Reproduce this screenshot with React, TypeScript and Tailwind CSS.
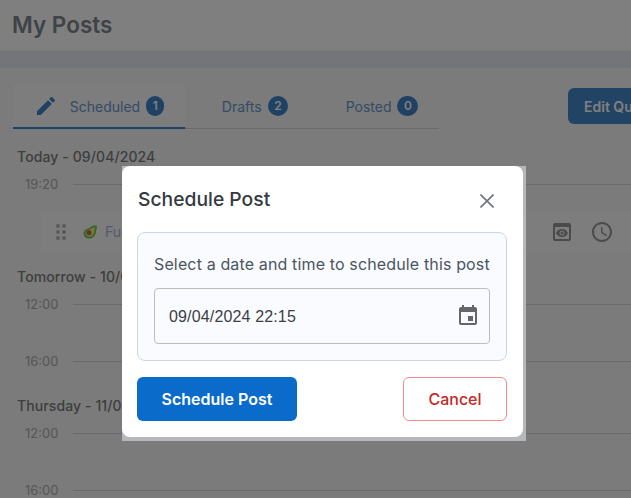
import React from 'react';

const EditIcon = () => (
  <svg viewBox="0 0 24 24" className="h-6 w-6 fill-[#3f83c8]" aria-hidden="true">
    <path d="M3 17.25V21h3.75L17.81 9.94l-3.75-3.75L3 17.25zM20.71 7.04a.996.996 0 0 0 0-1.41l-2.34-2.34a.996.996 0 0 0-1.41 0l-1.83 1.83 3.75 3.75 1.83-1.83z" />
  </svg>
);

const CalendarIcon = () => (
  <svg viewBox="0 0 24 24" className="h-6 w-6 fill-[#646669]" aria-hidden="true">
    <path d="M17 12h-5v5h5v-5zM16 1v2H8V1H6v2H5c-1.11 0-1.99.9-1.99 2L3 19c0 1.1.89 2 2 2h14c1.1 0 2-.9 2-2V5c0-1.1-.9-2-2-2h-1V1h-2zm3 18H5V8h14v11z" />
  </svg>
);

const PreviewIcon = () => (
  <svg viewBox="0 0 24 24" className="h-6 w-6 fill-[#969696]" aria-hidden="true">
    <path d="M19 3H5c-1.11 0-2 .9-2 2v14c0 1.1.89 2 2 2h14c1.1 0 2-.9 2-2V5c0-1.1-.89-2-2-2zm0 16H5V7h14v12zm-5.5-6c0 .83-.67 1.5-1.5 1.5s-1.5-.67-1.5-1.5.67-1.5 1.5-1.5 1.5.67 1.5 1.5zM12 9c-2.73 0-5.06 1.66-6 4 .94 2.34 3.27 4 6 4s5.06-1.66 6-4c-.94-2.34-3.27-4-6-4zm0 6.5c-1.38 0-2.5-1.12-2.5-2.5s1.12-2.5 2.5-2.5 2.5 1.12 2.5 2.5-1.12 2.5-2.5 2.5z" />
  </svg>
);

const ClockIcon = () => (
  <svg viewBox="0 0 24 24" className="h-6 w-6 fill-[#969696]" aria-hidden="true">
    <path d="M11.99 2C6.47 2 2 6.48 2 12s4.47 10 9.99 10C17.52 22 22 17.52 22 12S17.52 2 11.99 2zM12 20c-4.42 0-8-3.58-8-8s3.58-8 8-8 8 3.58 8 8-3.58 8-8 8zm.5-13H11v6l5.25 3.15.75-1.23-4.5-2.67z" />
  </svg>
);

const Avocado = () => (
  <svg viewBox="0 0 14 14" className="h-[14px] w-[14px] shrink-0" aria-hidden="true">
    <path d="M13.600.6c.6 1.700.2 3.800-.7 5.400.2 1.200-.2 3.400-1.700 5.200C9.700 13 7.500 13.800 5.300 13.500 2.500 13.100.4 10.800.5 8.200.6 5.900 2.300 4.300 4.500 3.700c1.200-.3 2.100-.7 2.900-1.500C8.700.9 11 .2 13.600.6z" fill="#7cc84a" />
    <path d="M11.800 2.200c.3 1.200 0 2.600-.6 3.800.1 1-.2 2.500-1.300 3.800-1.100 1.400-2.700 2-4.300 1.800-1.900-.3-3.200-1.800-3.100-3.500.1-1.500 1.200-2.500 2.700-2.900 1.300-.4 2.600-.9 3.500-1.800.8-.8 1.900-1.200 3.100-1.200z" fill="#f0f078" />
    <circle cx="6" cy="7.800" r="2.500" fill="#b06a5a" />
  </svg>
);

const tabs = [
  { name: 'Scheduled', count: 1, className: 'w-[172px] -mb-px border-b-2 border-[#3f83c8] bg-[#fafafa]' },
  { name: 'Drafts', count: 2, className: 'w-[140px]' },
  { name: 'Posted', count: 0, className: 'w-[114px]' },
];

// gruppi del calendario dietro al dialog
const days = [
  { title: 'Today - 09/04/2024', slots: ['19:20'], titleClass: 'mt-[18px]', hasPost: true },
  { title: 'Tomorrow - 10/04/2024', slots: ['12:00', '16:00'], titleClass: 'mt-[15px]', hasPost: false },
  { title: 'Thursday - 11/04/2024', slots: ['12:00', '16:00'], titleClass: 'mt-[28px]', hasPost: false },
];

const PostRow = () => (
  <div className="mt-[21px] ml-[41px] flex h-[40px] items-center rounded bg-[#fafafa] pr-[17px]">
    <div className="ml-[15px] grid grid-cols-2 gap-[2px]">
      {[0, 1, 2, 3, 4, 5].map((i) => (
        <span key={i} className="h-1 w-1 rounded-full bg-[#b4b4b4]" />
      ))}
    </div>
    <div className="ml-[17px] flex items-center gap-2">
      <Avocado />
      <span className="text-sm text-[#a4b6dc]">Fuel your day</span>
    </div>
    <div className="ml-auto flex items-center gap-4">
      <PreviewIcon />
      <ClockIcon />
    </div>
  </div>
);

export default function App() {
  return (
    <div className="relative h-[498px] w-[631px] overflow-hidden bg-white font-['Inter',sans-serif]">
      <header className="flex h-[52px] items-center border-b border-[#e6e6e6] px-3 pb-[2px]">
        <h1 className="text-[22.500px] font-semibold text-[#7f8790]">My Posts</h1>
      </header>
      <div className="h-4 bg-[#e8ebf0]" />

      <main className="h-[430px] bg-[#f5f6f5]">
        <div className="flex items-start pt-4">
          <div className="ml-[13px] flex h-[45px] w-[426px] items-stretch border-b border-[#d4d4d4]">
            {tabs.map((t, i) => (
              <div key={t.name} className={`flex items-center justify-center gap-[6px] ${t.className}`}>
                {i === 0 && (
                  <span className="mr-[6px]">
                    <EditIcon />
                  </span>
                )}
                <span className="pt-[2px] text-sm text-[#6a96cc]">{t.name}</span>
                <span className="flex h-5 items-center justify-center rounded-full bg-[#3f83c8] px-[6.500px] text-xs font-semibold text-white">
                  {t.count}
                </span>
              </div>
            ))}
          </div>
          <button className="mt-1 ml-auto flex h-[36px] w-[63px] items-center overflow-hidden rounded-l-md bg-[#4488c8] pt-[2px] pl-4 text-sm font-semibold whitespace-nowrap text-white">
            Edit Queue
          </button>
        </div>

        {days.map((day) => (
          <section key={day.title} className={day.titleClass}>
            <h2 className="ml-[17px] text-sm leading-5 font-medium tracking-[0.1px] text-[#7c7c7c]">{day.title}</h2>
            {day.slots.map((slot, i) => (
              <div key={slot} className={`flex items-center ${i === 0 ? 'mt-[10px]' : 'mt-[43px]'}`}>
                <span className="ml-[25px] w-[48px] text-[13px] leading-[14px] text-[#acacac]">{slot}</span>
                <div className="h-px flex-1 bg-[#d4d4d4]" />
              </div>
            ))}
            {day.hasPost && <PostRow />}
          </section>
        ))}
      </main>

      {/* overlay */}
      <div className="absolute inset-0 bg-[#000000]/50" />

      <div className="absolute top-[166px] left-[122px] bg-[#b5b7ba] pr-[3px] pb-[4px]">
        <div className="h-[271px] w-[401px] rounded-lg bg-white px-[15px] pt-[14px]">
          <div className="flex h-[38px] items-center justify-between">
            <h3 className="pl-px text-[19.300px] font-medium text-[#343a40]">Schedule Post</h3>
            <button className="mr-[14px] text-[#6b7280]" aria-label="Close">
              <svg viewBox="0 0 14 14" className="mt-1 h-[14px] w-[14px] stroke-current stroke-[1.600]" fill="none" aria-hidden="true">
                <path d="M.5.5l13 13M13.500.5l-13 13" />
              </svg>
            </button>
          </div>
          <div className="mt-[14px] h-[129px] w-[370px] rounded-lg border border-[#cbd8e2] bg-[#fafbfe] px-4 pt-[20px]">
            <p className="pt-px text-base leading-5 tracking-[0.14px] whitespace-nowrap text-[#4b5563]">Select a date and time to schedule this post</p>
            <div className="mt-[14px] flex h-[56px] items-center justify-between rounded border border-[#bdbdbd] pr-[9px] pl-[14px]">
              <span className="pt-px font-['Liberation_Sans',sans-serif] text-base tracking-[0.15px] text-[#3a3f45]">09/04/2024 22:15</span>
              <CalendarIcon />
            </div>
          </div>
          <div className="mt-[16px] flex w-[370px] justify-between">
            <button className="h-[44px] w-[160px] rounded-md bg-[#0a6bcb] text-base font-semibold text-white">Schedule Post</button>
            <button className="h-[44px] w-[104px] rounded-md border border-[#f28b8b] bg-white text-base font-medium text-[#c62828]">Cancel</button>
          </div>
        </div>
      </div>
    </div>
  );
}
